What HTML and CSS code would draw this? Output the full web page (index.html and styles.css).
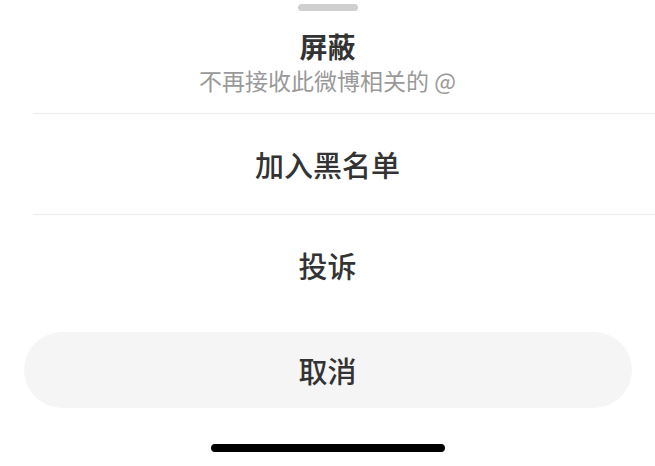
FILE: index.html
```html
<!DOCTYPE html>
<html lang="zh-CN">
<head>
    <meta charset="UTF-8">
    <meta name="viewport" content="width=device-width, initial-scale=1.0">
    <title>屏蔽</title>
    <link rel="stylesheet" href="styles.css">
</head>
<body>
    <div class="sheet">
        <div class="grabber"></div>
        <div class="item item-head">
            <div class="title">屏蔽</div>
            <div class="subtitle">不再接收此微博相关的 @</div>
        </div>
        <div class="item item-row">加入黑名单</div>
        <div class="item item-row item-last">投诉</div>
        <button class="cancel">取消</button>
        <div class="home-bar"></div>
    </div>
</body>
</html>
```

FILE: styles.css
```css
/* General Styles */
body {
    margin: 0;
    padding: 0;
    background: #fff;
    font-family: 'Noto Sans CJK SC', 'Noto Sans', sans-serif;
    color: #333;
}
.sheet {
    width: 655px;
    height: 466px;
    display: flex;
    flex-direction: column;
    align-items: center;
    overflow: hidden;
}
.grabber {
    width: 60px;
    height: 7px;
    border-radius: 4px;
    background: #cfcfcf;
    margin-top: 4px;
}
.item {
    align-self: stretch;
    margin-left: 33px;
    border-bottom: 1px solid #ececec;
    text-align: center;
    padding-right: 33px;
}
.item-head {
    height: 102px;
    display: flex;
    flex-direction: column;
    align-items: center;
}
.title {
    font-size: 28px;
    font-weight: 700;
    line-height: 36px;
    margin-top: 17px;
}
.subtitle {
    font-size: 23px;
    line-height: 28px;
    color: #999;
    margin-top: 2px;
}
.item-row {
    height: 100px;
    line-height: 100px;
    font-size: 29px;
    font-weight: 500;
}
.item-last {
    border-bottom: none;
}
.cancel {
    width: 608px;
    height: 76px;
    margin-top: 17px;
    border: none;
    border-radius: 38px;
    background: #f5f5f5;
    font-family: inherit;
    font-size: 29px;
    font-weight: 500;
    color: #333;
    padding: 0;
}
.home-bar {
    width: 234px;
    height: 8px;
    border-radius: 4px;
    background: #000;
    margin-top: 36px;
}
```
